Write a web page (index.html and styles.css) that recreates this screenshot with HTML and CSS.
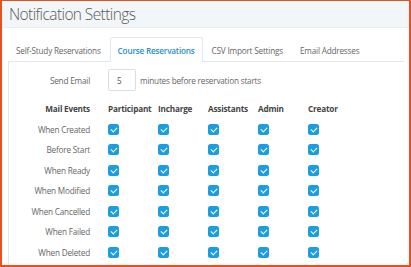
FILE: index.html
```html
<!DOCTYPE html>
<html>
<head>
 <title>Notification Settings</title>
 <link rel="stylesheet" href="styles.css">
</head>
<body>
 <!-- outer frame with the orange highlight -->
 <div class="frame">
  <!-- page header -->
  <div class="page-header">Notification Settings</div>

  <!-- tabs for the settings sections -->
  <ul class="tabs">
   <li class="tab">Self-Study Reservations</li>
   <li class="tab active">Course Reservations</li>
   <li class="tab">CSV Import Settings</li>
   <li class="tab">Email Addresses</li>
  </ul>

  <!-- panel for the course reservation settings -->
  <div class="tab-panel">
   <div class="send-row">
    <span class="row-label">Send Email</span>
    <input class="minutes-input" type="text" value="5">
    <span class="send-text">minutes before reservation starts</span>
   </div>

   <div class="events-table">
    <div class="event-row head-row">
     <span class="row-label">Mail Events</span>
     <span class="cell">Participant</span>
     <span class="cell">Incharge</span>
     <span class="cell">Assistants</span>
     <span class="cell">Admin</span>
     <span class="cell">Creator</span>
    </div>
    <div class="event-row">
     <span class="row-label">When Created</span>
     <span class="cell"><span class="check"></span></span>
     <span class="cell"><span class="check"></span></span>
     <span class="cell"><span class="check"></span></span>
     <span class="cell"><span class="check"></span></span>
     <span class="cell"><span class="check"></span></span>
    </div>
    <div class="event-row">
     <span class="row-label">Before Start</span>
     <span class="cell"><span class="check"></span></span>
     <span class="cell"><span class="check"></span></span>
     <span class="cell"><span class="check"></span></span>
     <span class="cell"><span class="check"></span></span>
     <span class="cell"><span class="check"></span></span>
    </div>
    <div class="event-row">
     <span class="row-label">When Ready</span>
     <span class="cell"><span class="check"></span></span>
     <span class="cell"><span class="check"></span></span>
     <span class="cell"><span class="check"></span></span>
     <span class="cell"><span class="check"></span></span>
     <span class="cell"><span class="check"></span></span>
    </div>
    <div class="event-row">
     <span class="row-label">When Modified</span>
     <span class="cell"><span class="check"></span></span>
     <span class="cell"><span class="check"></span></span>
     <span class="cell"><span class="check"></span></span>
     <span class="cell"><span class="check"></span></span>
     <span class="cell"><span class="check"></span></span>
    </div>
    <div class="event-row">
     <span class="row-label">When Cancelled</span>
     <span class="cell"><span class="check"></span></span>
     <span class="cell"><span class="check"></span></span>
     <span class="cell"><span class="check"></span></span>
     <span class="cell"><span class="check"></span></span>
     <span class="cell"><span class="check"></span></span>
    </div>
    <div class="event-row">
     <span class="row-label">When Failed</span>
     <span class="cell"><span class="check"></span></span>
     <span class="cell"><span class="check"></span></span>
     <span class="cell"><span class="check"></span></span>
     <span class="cell"><span class="check"></span></span>
     <span class="cell"><span class="check"></span></span>
    </div>
    <div class="event-row">
     <span class="row-label">When Deleted</span>
     <span class="cell"><span class="check"></span></span>
     <span class="cell"><span class="check"></span></span>
     <span class="cell"><span class="check"></span></span>
     <span class="cell"><span class="check"></span></span>
     <span class="cell"><span class="check"></span></span>
    </div>
   </div>
  </div>
 </div>
</body>
</html>
```

FILE: styles.css
```css
/* page basics */
body {
 margin: 0;
 font-family: "Open Sans", "Liberation Sans", sans-serif;
 font-size: 8.2px;
 letter-spacing: -0.2px;
 color: #666;
 background: #fff;
}

/* orange frame round the whole shot */
.frame {
 height: 267px;
 box-sizing: border-box;
 border: 2px solid #e8501e;
 border-top-width: 1px;
 overflow: hidden;
}

/* grey page header */
.page-header {
 height: 27px;
 background: #f3f6f8;
 border-bottom: 1px solid #e9eef1;
 box-sizing: border-box;
 padding-left: 7px;
 font-size: 15.5px;
 font-weight: 300;
 letter-spacing: -0.6px;
 line-height: 26px;
 color: #5a5a5a;
}

/* tabs */
.tabs {
 display: flex;
 list-style: none;
 margin: 9px 5px 0 6px;
 padding: 0;
 border-bottom: 1px solid #e3e7ea;
}
.tab {
 height: 25px;
 line-height: 25px;
 padding: 0 7px;
 margin-right: 1px;
 margin-bottom: -1px;
 color: #666;
 box-sizing: border-box;
 border: 1px solid transparent;
}
.tab.active {
 color: #2a8fc9;
 font-weight: 600;
 background: #fff;
 border-color: #e3e7ea;
 border-bottom-color: #fff;
 border-radius: 2px 2px 0 0;
}

/* tab panel */
.tab-panel {
 margin-left: 6px;
 border-left: 1px solid #e3e7ea;
 padding-top: 7px;
 height: 210px;
}

/* label column on the left */
.row-label {
 width: 81px;
 margin-right: 18px;
 text-align: right;
 flex-shrink: 0;
}

/* send email row */
.send-row {
 display: flex;
 align-items: center;
 height: 22px;
}
.minutes-input {
 width: 28px;
 height: 22px;
 box-sizing: border-box;
 border: 1px solid #d9dee2;
 border-radius: 2px;
 padding: 0 0 0 8px;
 font: inherit;
 color: #555;
 margin: 0 4px 0 0;
}

/* events table */
.events-table {
 margin-top: 6px;
}
.event-row {
 display: flex;
 align-items: center;
 height: 20.5px;
}
.head-row {
 height: 22px;
 font-weight: 700;
 color: #444;
}
.cell {
 width: 50px;
 flex-shrink: 0;
 display: flex;
 align-items: center;
}

/* blue ticked checkbox */
.check {
 position: relative;
 display: block;
 width: 11px;
 height: 11px;
 border-radius: 2.5px;
 background: #1a9ee0;
}
.check::after {
 content: "";
 position: absolute;
 left: 3.5px;
 top: 2px;
 width: 3px;
 height: 5px;
 border: solid #fff;
 border-width: 0 1.5px 1.5px 0;
 transform: rotate(45deg);
}
```
